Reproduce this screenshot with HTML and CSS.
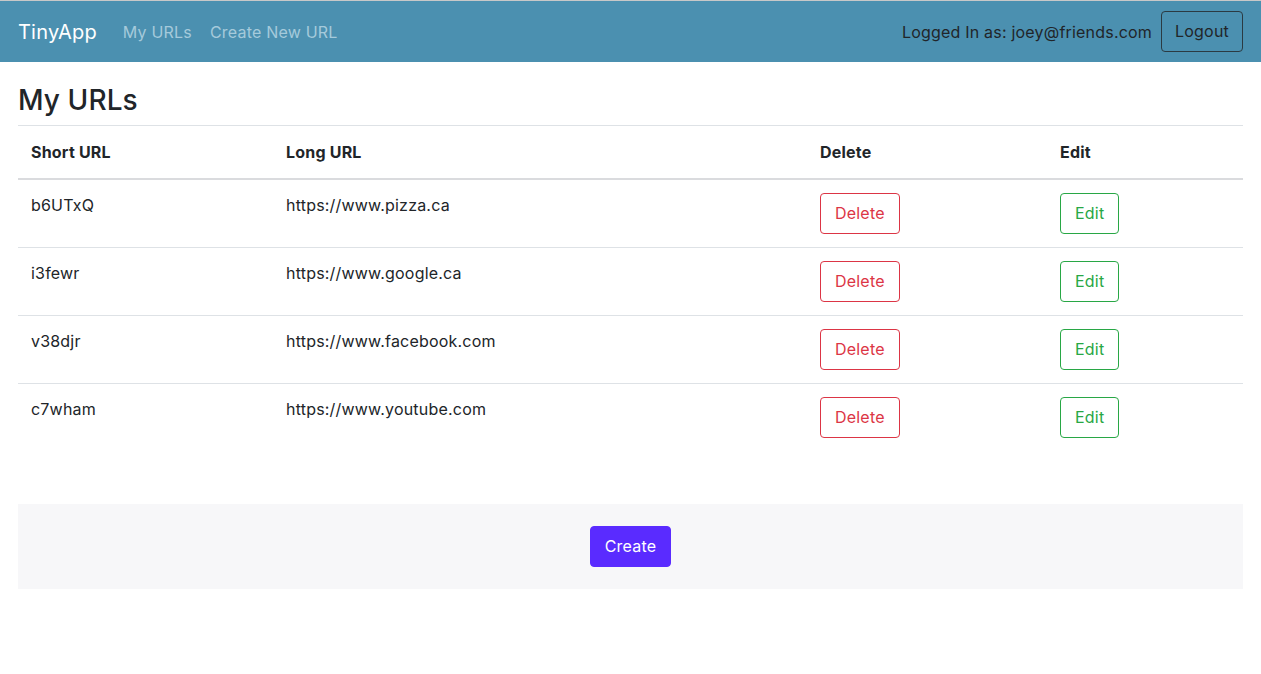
FILE: index.html
```html
<!DOCTYPE html>
<html lang="en">
<head>
<meta charset="utf-8">
<title>TinyApp</title>
<link rel="stylesheet" href="styles.css">
</head>
<body>
<nav class="navbar">
  <div class="nav-left">
    <a class="brand" href="#">TinyApp</a>
    <a class="nav-link" href="#">My URLs</a>
    <a class="nav-link" href="#">Create New URL</a>
  </div>
  <div class="nav-right">
    <span class="user">Logged In as: joey@friends.com</span>
    <button class="btn btn-logout">Logout</button>
  </div>
</nav>
<main class="main">
  <h3 class="title">My URLs</h3>
  <table class="table">
    <thead>
      <tr>
        <th class="c1">Short URL</th>
        <th class="c2">Long URL</th>
        <th class="c3">Delete</th>
        <th class="c4">Edit</th>
      </tr>
    </thead>
    <tbody>
      <tr><td>b6UTxQ</td><td>https://www.pizza.ca</td><td><button class="btn btn-delete">Delete</button></td><td><button class="btn btn-edit">Edit</button></td></tr>
      <tr><td>i3fewr</td><td>https://www.google.ca</td><td><button class="btn btn-delete">Delete</button></td><td><button class="btn btn-edit">Edit</button></td></tr>
      <tr><td>v38djr</td><td>https://www.facebook.com</td><td><button class="btn btn-delete">Delete</button></td><td><button class="btn btn-edit">Edit</button></td></tr>
      <tr><td>c7wham</td><td>https://www.youtube.com</td><td><button class="btn btn-delete">Delete</button></td><td><button class="btn btn-edit">Edit</button></td></tr>
    </tbody>
  </table>
  <div class="footer-box">
    <button class="btn btn-create">Create</button>
  </div>
</main>
</body>
</html>
```
FILE: styles.css
```css
* { box-sizing: border-box; }
body {
  margin: 0;
  font-family: "Inter", "Liberation Sans", sans-serif;
  font-size: 16px;
  line-height: 24px;
  letter-spacing: 0.2px;
  color: #212529;
  background: #fff;
  border-top: 1px solid #c8c8c8;
}
.navbar {
  height: 61px;
  background: #4b90b0;
  display: flex;
  align-items: center;
  justify-content: space-between;
  padding: 0 18px;
}
.nav-left { display: flex; align-items: center; }
.brand {
  color: #fff;
  font-size: 20px;
  text-decoration: none;
  margin-right: 26px;
}
.nav-link {
  color: #a5cadb;
  text-decoration: none;
  margin-right: 18px;
}
.nav-right { display: flex; align-items: center; }
.user { margin-right: 9px; }
.btn {
  font-family: inherit;
  font-size: 16px;
  line-height: 25px;
  letter-spacing: 0.2px;
  padding: 7px 14px;
  border-radius: 4px;
  background: transparent;
  border: 1px solid transparent;
  cursor: pointer;
}
.btn-logout {
  border-color: #2b3a42;
  color: #212529;
  padding: 7px 13px;
}
.main { padding: 0 18px; }
.title {
  font-size: 28px;
  font-weight: 500;
  line-height: 34px;
  letter-spacing: 0.1px;
  margin: 21px 0 8px;
}
.table {
  width: 100%;
  border-collapse: collapse;
  border-top: 1px solid #dee2e6;
}
.table th {
  text-align: left;
  font-weight: 700;
  padding: 14px 13px;
  border-bottom: 2px solid #dadbde;
}
.table td {
  padding: 13px 13px;
  vertical-align: top;
  border-bottom: 1px solid #dee2e6;
}
.table tbody tr:last-child td { border-bottom: none; }
.c1 { width: 255px; }
.c2 { width: 534px; }
.c3 { width: 240px; }
.btn-delete { border-color: #dc3545; color: #dc3545; }
.btn-edit { border-color: #28a745; color: #28a745; }
.footer-box {
  margin-top: 53px;
  background: #f7f7f9;
  height: 85px;
  display: flex;
  align-items: center;
  justify-content: center;
}
.btn-create {
  background: #5a2bff;
  color: #fff;
  border-color: #5a2bff;
}
```
